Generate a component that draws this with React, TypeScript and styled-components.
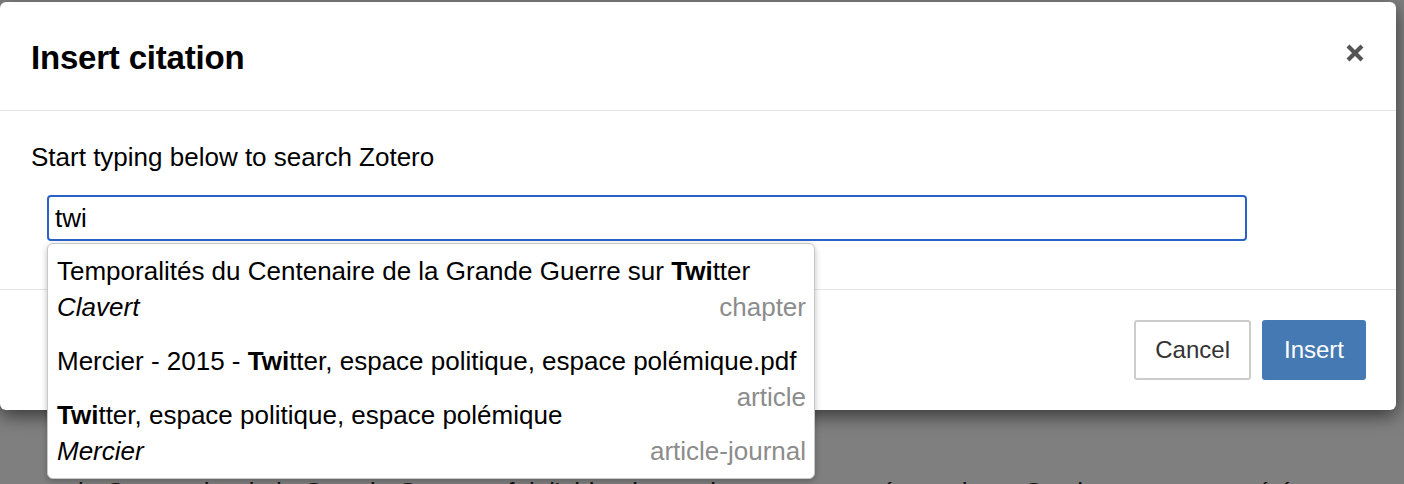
import React from "react";
import styled, { createGlobalStyle } from "styled-components";

const GlobalStyle = createGlobalStyle`
  html, body {
    margin: 0;
    padding: 0;
    background: #7f7f7f;
    overflow: hidden;
  }
  body {
    font-family: "Liberation Sans", Arial, Helvetica, sans-serif;
    color: #000;
  }
  * { box-sizing: border-box; }
`;

const Page = styled.div`
  position: relative;
  width: 1404px;
  height: 484px;
  overflow: hidden;
  background: #7f7f7f;
`;

const Backdrop = styled.div`
  display: flex;
  flex-direction: column;
  height: 100%;
  padding-top: 431px;
`;

const BackLine = styled.div<{ $gap: number }>`
  height: 2px;
  background: #555;
  margin-bottom: ${(p) => p.$gap}px;
`;

const BackText = styled.p`
  margin: 0;
  padding-left: 78px;
  font-size: 26px;
  line-height: 30px;
  color: #111;
  white-space: nowrap;
`;

const Modal = styled.div`
  position: absolute;
  left: 0;
  top: 2px;
  width: 1396px;
  background: #fff;
  border-radius: 6px;
  box-shadow: 0 6px 18px rgba(0, 0, 0, 0.55);
  display: flex;
  flex-direction: column;
`;

const Header = styled.div`
  height: 109px;
  display: flex;
  align-items: center;
  justify-content: space-between;
  padding: 3px 31px 0 31px;
  border-bottom: 1px solid #e5e5e5;
`;

const Title = styled.h4`
  margin: 0;
  font-size: 33px;
  font-weight: bold;
  letter-spacing: -0.2px;
  color: #000;
`;

const Close = styled.button`
  border: 0;
  background: none;
  padding: 0;
  margin-top: -9px;
  display: flex;
  cursor: pointer;
`;

const Body = styled.div`
  height: 179px;
  padding: 31px 31px 0 31px;
  border-bottom: 1px solid #e5e5e5;
`;

const Label = styled.p`
  margin: 0 0 23px 0;
  font-size: 26px;
  line-height: 30px;
  color: #000;
`;

const SearchWrap = styled.div`
  position: relative;
  margin-left: 16px;
  width: 1200px;
`;

const Input = styled.input`
  width: 100%;
  height: 46px;
  border: 2px solid #2a63c7;
  border-radius: 4px;
  padding: 0 6px;
  font-family: inherit;
  font-size: 26px;
  color: #000;
  outline: none;
  background: #fff;
`;

const Dropdown = styled.div`
  position: absolute;
  left: 0;
  top: 48px;
  width: 768px;
  background: #fff;
  border: 1px solid #c8c8c8;
  border-radius: 6px;
  box-shadow: 0 2px 6px rgba(0, 0, 0, 0.25);
  z-index: 2;
`;

const Item = styled.div`
  padding: 9px 8px 9px 9px;
  font-size: 26px;
  line-height: 36px;
  color: #000;
`;

const ItemTitle = styled.div`
  white-space: nowrap;
`;

const ItemType = styled.span`
  float: right;
  color: #8c8c8c;
`;

const Author = styled.span`
  font-style: italic;
`;

const Footer = styled.div`
  display: flex;
  justify-content: flex-end;
  gap: 11px;
  padding: 30px 30px 30px 30px;
`;

const Button = styled.button<{ $primary?: boolean }>`
  height: 60px;
  padding: 0 ${(p) => (p.$primary ? 20 : 19)}px;
  font-family: inherit;
  font-size: 24px;
  border-radius: 3px;
  border: 2px solid ${(p) => (p.$primary ? "#4479b3" : "#cccccc")};
  background: ${(p) => (p.$primary ? "#4479b3" : "#fff")};
  color: ${(p) => (p.$primary ? "#fff" : "#333")};
  cursor: pointer;
`;

type Result = {
  before: string;
  match: string;
  after: string;
  author?: string;
  type: string;
};

const results: Result[] = [
  {
    before: "Temporalités du Centenaire de la Grande Guerre sur ",
    match: "Twi",
    after: "tter",
    author: "Clavert",
    type: "chapter",
  },
  {
    before: "Mercier - 2015 - ",
    match: "Twi",
    after: "tter, espace politique, espace polémique.pdf",
    type: "article",
  },
  {
    before: "",
    match: "Twi",
    after: "tter, espace politique, espace polémique",
    author: "Mercier",
    type: "article-journal",
  },
];

const CloseIcon = () => (
  <svg width="20" height="20" viewBox="0 0 20 20" aria-hidden="true">
    <path d="M3 3 L17 17 M17 3 L3 17" stroke="#555" strokeWidth="4.2" strokeLinecap="butt" />
  </svg>
);

export default function App() {
  return (
    <Page>
      <GlobalStyle />
      <Backdrop>
        <BackLine $gap={10} />
        <BackLine $gap={36} />
        <BackText>
          la Centenaire de la Grande Guerre a fait l'objet de nombreuses commémorations. Ces hommages ont été
        </BackText>
      </Backdrop>
      <Modal>
        <Header>
          <Title>Insert citation</Title>
          <Close aria-label="Close">
            <CloseIcon />
          </Close>
        </Header>
        <Body>
          <Label>Start typing below to search Zotero</Label>
          <SearchWrap>
            <Input defaultValue="twi" />
            <Dropdown>
              {results.map((r, i) => (
                <Item key={i}>
                  <ItemTitle>
                    {r.before}
                    <b>{r.match}</b>
                    {r.after}
                  </ItemTitle>
                  <ItemType>{r.type}</ItemType>
                  {r.author && <Author>{r.author}</Author>}
                </Item>
              ))}
            </Dropdown>
          </SearchWrap>
        </Body>
        <Footer>
          <Button>Cancel</Button>
          <Button $primary>Insert</Button>
        </Footer>
      </Modal>
    </Page>
  );
}
